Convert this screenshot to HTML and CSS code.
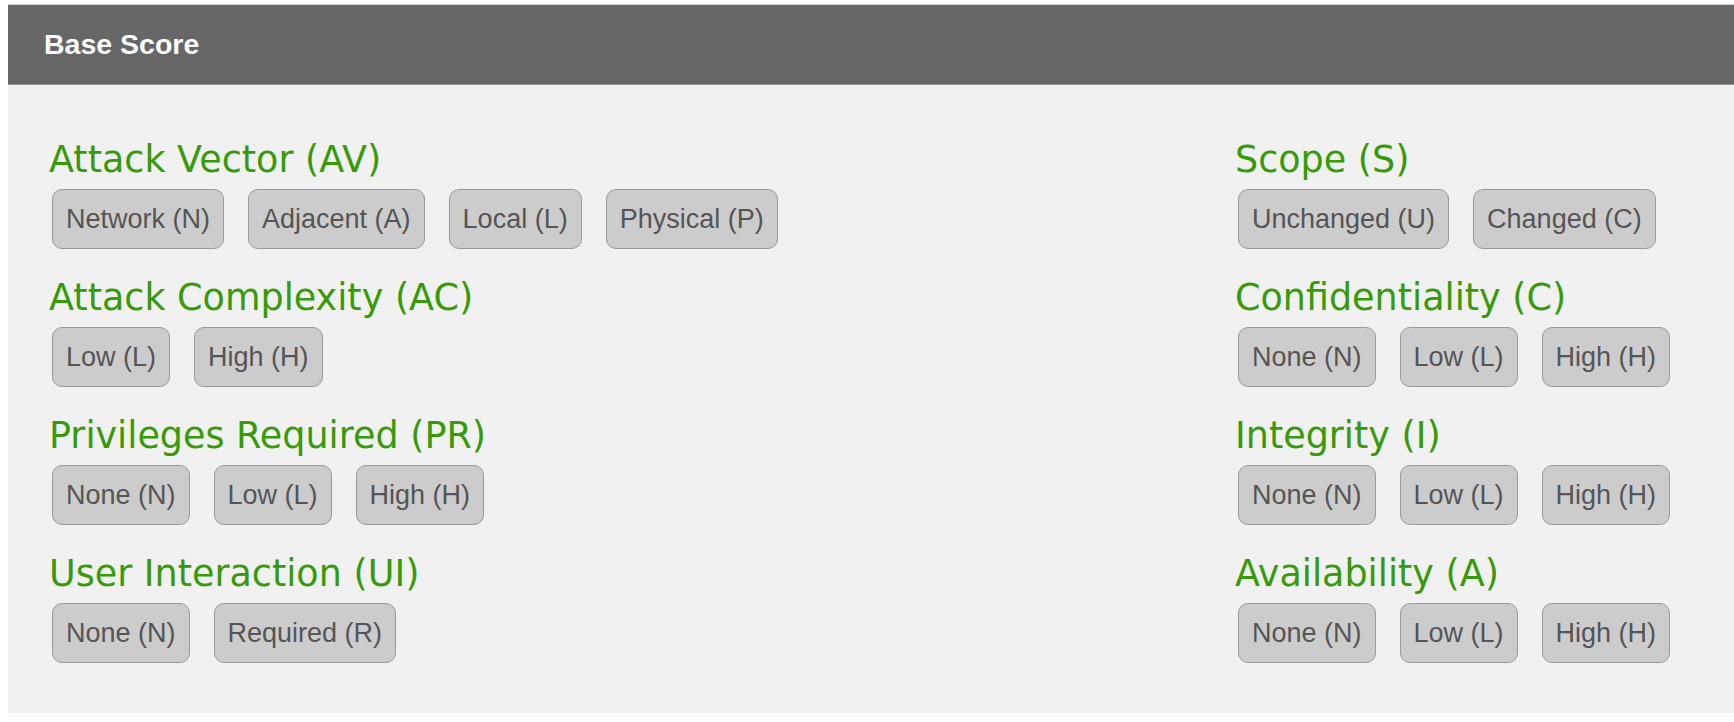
FILE: index.html
```html
<!DOCTYPE html>
<html>
<head>
<meta charset="utf-8">
<title>Base Score</title>
<link rel="stylesheet" href="styles.css">
</head>
<body>
<section class="panel">
  <header class="panel-head">Base Score</header>
  <div class="panel-body">
    <div class="col">
      <div class="metric">
        <h3 class="metric-title">Attack Vector (AV)</h3>
        <div class="opts">
          <button class="opt">Network (N)</button>
          <button class="opt">Adjacent (A)</button>
          <button class="opt">Local (L)</button>
          <button class="opt">Physical (P)</button>
        </div>
      </div>
      <div class="metric">
        <h3 class="metric-title">Attack Complexity (AC)</h3>
        <div class="opts">
          <button class="opt">Low (L)</button>
          <button class="opt">High (H)</button>
        </div>
      </div>
      <div class="metric">
        <h3 class="metric-title">Privileges Required (PR)</h3>
        <div class="opts">
          <button class="opt">None (N)</button>
          <button class="opt">Low (L)</button>
          <button class="opt">High (H)</button>
        </div>
      </div>
      <div class="metric">
        <h3 class="metric-title">User Interaction (UI)</h3>
        <div class="opts">
          <button class="opt">None (N)</button>
          <button class="opt">Required (R)</button>
        </div>
      </div>
    </div>
    <div class="col">
      <div class="metric">
        <h3 class="metric-title">Scope (S)</h3>
        <div class="opts">
          <button class="opt">Unchanged (U)</button>
          <button class="opt">Changed (C)</button>
        </div>
      </div>
      <div class="metric">
        <h3 class="metric-title">Confidentiality (C)</h3>
        <div class="opts">
          <button class="opt">None (N)</button>
          <button class="opt">Low (L)</button>
          <button class="opt">High (H)</button>
        </div>
      </div>
      <div class="metric">
        <h3 class="metric-title">Integrity (I)</h3>
        <div class="opts">
          <button class="opt">None (N)</button>
          <button class="opt">Low (L)</button>
          <button class="opt">High (H)</button>
        </div>
      </div>
      <div class="metric">
        <h3 class="metric-title">Availability (A)</h3>
        <div class="opts">
          <button class="opt">None (N)</button>
          <button class="opt">Low (L)</button>
          <button class="opt">High (H)</button>
        </div>
      </div>
    </div>
  </div>
</section>
</body>
</html>
```

FILE: styles.css
```css
html, body {
  margin: 0;
  padding: 0;
  background: #ffffff;
}

body {
  font-family: "Liberation Sans", Arial, sans-serif;
}

.panel {
  margin: 4px 0 0 8px;
  border-top: 1px solid #cfcfcf;
  background: #f1f1f1;
}

.panel-head {
  height: 79px;
  line-height: 78px;
  border-bottom: 1px solid #8e8e8e;
  background: #666666;
  color: #ffffff;
  font-family: "Liberation Sans", Arial, sans-serif;
  font-weight: bold;
  font-size: 28.5px;
  padding-left: 36px;
}

.panel-body {
  display: grid;
  grid-template-columns: 1186px 1fr;
  padding: 54px 0 50px 41px;
}

.col {
  display: flex;
  flex-direction: column;
  gap: 28px;
}

.metric-title {
  margin: 0 0 8px 0;
  font-family: "DejaVu Sans", Verdana, sans-serif;
  font-weight: normal;
  font-size: 36.5px;
  line-height: 42px;
  color: #379a08;
}

.opts {
  display: flex;
  gap: 24px;
  margin-left: 3px;
}

.opt {
  box-sizing: border-box;
  height: 60px;
  margin: 0;
  padding: 0 13px;
  border: 1px solid #9a9a9a;
  border-radius: 10px;
  background: #cccccc;
  color: #555555;
  font-family: "Liberation Sans", Arial, sans-serif;
  font-size: 27px;
  line-height: 58px;
}
```
